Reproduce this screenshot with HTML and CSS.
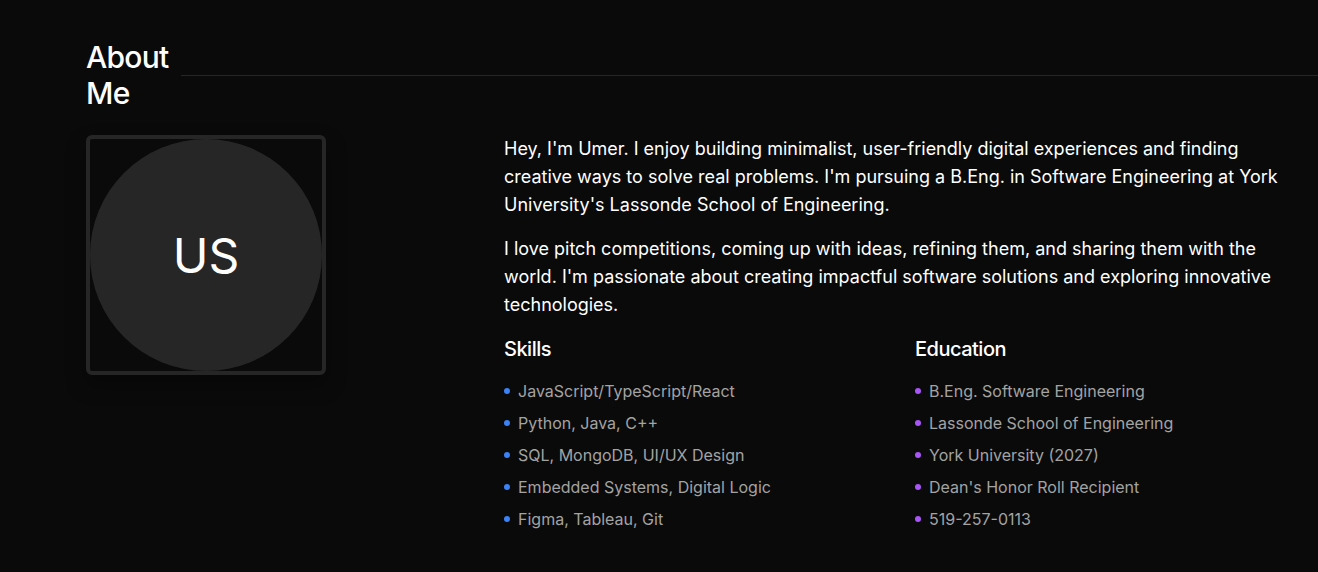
FILE: index.html
```html
<!DOCTYPE html>
<html lang="en">
<head>
<meta charset="utf-8">
<title>About Me</title>
<link rel="stylesheet" href="styles.css">
</head>
<body>
<section class="about">
  <div class="section-head">
    <h2 class="section-title">About Me</h2>
    <div class="section-rule"></div>
  </div>
  <div class="about-body">
    <div class="avatar-col">
      <div class="avatar-frame">
        <div class="avatar-circle">US</div>
      </div>
    </div>
    <div class="text-col">
      <p class="lead">Hey, I'm Umer. I enjoy building minimalist, user-friendly digital experiences and finding creative ways to solve real problems. I'm pursuing a B.Eng. in Software Engineering at York University's Lassonde School of Engineering.</p>
      <p class="lead">I love pitch competitions, coming up with ideas, refining them, and sharing them with the world. I'm passionate about creating impactful software solutions and exploring innovative technologies.</p>
      <div class="lists">
        <div class="list-block">
          <h3 class="list-title">Skills</h3>
          <ul class="list list-blue">
            <li>JavaScript/TypeScript/React</li>
            <li>Python, Java, C++</li>
            <li>SQL, MongoDB, UI/UX Design</li>
            <li>Embedded Systems, Digital Logic</li>
            <li>Figma, Tableau, Git</li>
          </ul>
        </div>
        <div class="list-block">
          <h3 class="list-title">Education</h3>
          <ul class="list list-purple">
            <li>B.Eng. Software Engineering</li>
            <li>Lassonde School of Engineering</li>
            <li>York University (2027)</li>
            <li>Dean's Honor Roll Recipient</li>
            <li>519-257-0113</li>
          </ul>
        </div>
      </div>
    </div>
  </div>
</section>
</body>
</html>
```
FILE: styles.css
```css
* { box-sizing: border-box; }
html, body {
  margin: 0;
  padding: 0;
  background: #0a0a0a;
  color: #ffffff;
  font-family: Inter, "Noto Sans", sans-serif;
  overflow: hidden;
}
.about {
  padding: 39px 0 0 86px;
}
.section-head {
  display: flex;
  align-items: center;
  margin-bottom: 24px;
}
.section-title {
  margin: 0;
  font-size: 30px;
  line-height: 36px;
  font-weight: 500;
  letter-spacing: -0.025em;
  width: 83px;
  flex-shrink: 0;
}
.section-rule {
  flex: 1;
  height: 1px;
  background: #262626;
  margin-left: 12px;
}
.about-body {
  display: flex;
}
.avatar-col {
  width: 418px;
  flex-shrink: 0;
}
.avatar-frame {
  width: 240px;
  height: 240px;
  border: 4px solid #262626;
  border-radius: 6px;
  box-shadow: 0 10px 20px rgba(0, 0, 0, 0.35);
  display: flex;
  align-items: center;
  justify-content: center;
}
.avatar-circle {
  width: 232px;
  height: 232px;
  border-radius: 50%;
  background: #262626;
  display: flex;
  align-items: center;
  justify-content: center;
  font-size: 48px;
  font-weight: 400;
  color: #ffffff;
}
.text-col {
  width: 790px;
}
.lead {
  margin: 0 0 16px;
  font-size: 18px;
  line-height: 28px;
  color: #ffffff;
}
.lists {
  display: grid;
  grid-template-columns: 1fr 1fr;
  column-gap: 32px;
  margin-top: 16px;
}
.list-title {
  margin: 0 0 16px;
  font-size: 20px;
  line-height: 28px;
  font-weight: 500;
  letter-spacing: -0.025em;
}
.list {
  list-style: none;
  margin: 0;
  padding: 0;
}
.list li {
  display: flex;
  align-items: center;
  font-size: 16px;
  line-height: 24px;
  color: #a3a3a3;
  margin-bottom: 8px;
}
.list li::before {
  content: "";
  width: 6px;
  height: 6px;
  border-radius: 50%;
  margin: 0 8px 0 0;
  flex-shrink: 0;
}
.list-blue li::before { background: #3b82f6; }
.list-purple li::before { background: #a855f7; }
```
